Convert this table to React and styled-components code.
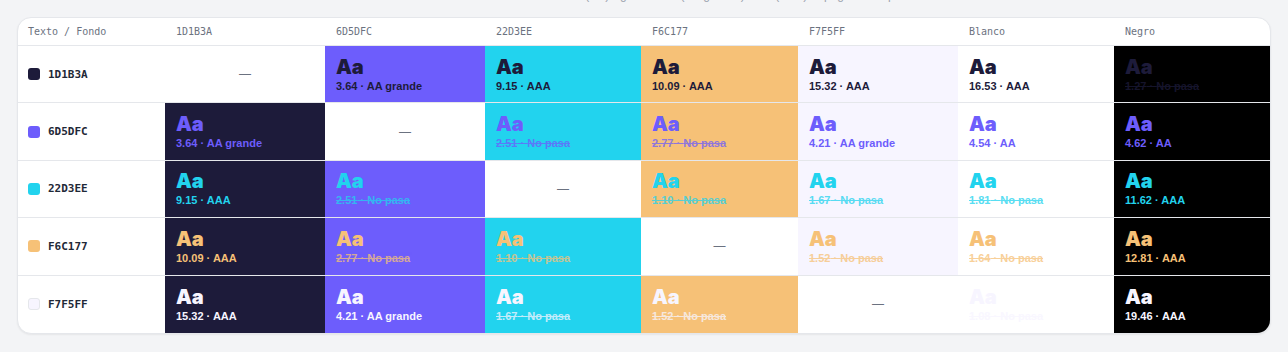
import React from 'react';
import styled, { createGlobalStyle } from 'styled-components';

const GlobalStyle = createGlobalStyle`
  html, body {
    margin: 0;
    padding: 0;
    background: #f3f4f6;
    font-family: 'Liberation Sans', Arial, sans-serif;
  }

  *, *:before, *:after {
    box-sizing: border-box;
  }
`;

const Page = styled.div`
  padding: 0 17px 17px;
  overflow: hidden;
`;

const Caption = styled.p`
  margin: -13px 0 14px;
  height: 16px;
  line-height: 16px;
  text-align: center;
  font-size: 12px;
  color: #9ca3af;
`;

const Card = styled.div`
  background: #ffffff;
  border: 1px solid #e5e7eb;
  border-radius: 14px;
  overflow: hidden;
  box-shadow: 0 1px 2px rgba(0, 0, 0, 0.06);
`;

const Grid = styled.div`
  display: grid;
  grid-template-columns: 147px 160px 160px 156px 157px 160px 156px 1fr;
`;

const HeadCell = styled.div`
  height: 28px;
  display: flex;
  align-items: center;
  font-family: 'DejaVu Sans Mono', 'Liberation Mono', monospace;
  font-size: 10px;
  color: #6b7280;
  border-bottom: 1px solid #e5e7eb;
  padding: 0 10px 0 ${p => (p.$first ? '10px' : '11px')};
`;

const RowLabel = styled.div`
  height: 57.4px;
  padding: 0 10px;
  display: flex;
  align-items: center;
  gap: 8px;
  font-family: 'DejaVu Sans Mono', 'Liberation Mono', monospace;
  font-size: 11px;
  font-weight: 600;
  color: #1f2937;
  border-bottom: ${p => (p.$last ? 'none' : '1px solid #e5e7eb')};
`;

const Swatch = styled.span`
  width: 12px;
  height: 12px;
  border-radius: 3px;
  flex-shrink: 0;
  background: ${p => p.$color};
  border: ${p => (p.$light ? '1px solid #e5e7eb' : 'none')};
`;

const Cell = styled.div`
  height: 57.4px;
  padding: 0 11px;
  display: flex;
  flex-direction: column;
  justify-content: center;
  background: ${p => p.$bg};
  color: ${p => p.$fg};
  border-bottom: ${p => (p.$last ? 'none' : '1px solid #e5e7eb')};
`;

const EmptyCell = styled(Cell)`
  align-items: center;
  font-size: 12px;
  color: #6b7280;
`;

const Sample = styled.span`
  font-family: Inter, 'Liberation Sans', sans-serif;
  font-size: 20px;
  font-weight: 900;
  line-height: 22px;
  letter-spacing: -0.2px;
`;

const Ratio = styled.span`
  margin-top: 1px;
  font-size: 11px;
  font-weight: 700;
  line-height: 14px;
  white-space: nowrap;
  text-decoration: ${p => (p.$fail ? 'line-through' : 'none')};
  opacity: ${p => (p.$fail ? 0.75 : 1)};
`;

const textColors = ['1D1B3A', '6D5DFC', '22D3EE', 'F6C177', 'F7F5FF'];

const backgrounds = [
  { name: '1D1B3A', hex: '#1D1B3A' },
  { name: '6D5DFC', hex: '#6D5DFC' },
  { name: '22D3EE', hex: '#22D3EE' },
  { name: 'F6C177', hex: '#F6C177' },
  { name: 'F7F5FF', hex: '#F7F5FF' },
  { name: 'Blanco', hex: '#FFFFFF' },
  { name: 'Negro', hex: '#000000' },
];

const luminance = (hex) => {
  const h = hex.replace('#', '');
  const [r, g, b] = [0, 2, 4].map(i => {
    const c = parseInt(h.slice(i, i + 2), 16) / 255;
    return c <= 0.03928 ? c / 12.92 : Math.pow((c + 0.055) / 1.055, 2.4);
  });
  return 0.2126 * r + 0.7152 * g + 0.0722 * b;
};

const contrast = (a, b) => {
  const l1 = luminance(a);
  const l2 = luminance(b);
  return (Math.max(l1, l2) + 0.05) / (Math.min(l1, l2) + 0.05);
};

const rating = (ratio) => {
  if (ratio >= 7) return 'AAA';
  if (ratio >= 4.5) return 'AA';
  if (ratio >= 3) return 'AA grande';
  return 'No pasa';
};

const App = () => {
  return (
    <>
      <GlobalStyle />
      <Page>
        <Caption>Contraste WCAG 2.1 · texto normal ≥ 4.5 (AA) · grande ≥ 3 (AA grande) · ≥ 7 (AAA) · tipografía de prueba</Caption>
        <Card>
          <Grid>
            <HeadCell $first>Texto / Fondo</HeadCell>
            {backgrounds.map(bg => (
              <HeadCell key={bg.name}>{bg.name}</HeadCell>
            ))}

            {textColors.map((text, rowIndex) => {
              const fg = `#${text}`;
              const last = rowIndex === textColors.length - 1;
              return (
                <React.Fragment key={text}>
                  <RowLabel $last={last}>
                    <Swatch $color={fg} $light={text === 'F7F5FF'} />
                    {text}
                  </RowLabel>
                  {backgrounds.map(bg => {
                    if (bg.name === text) {
                      return (
                        <EmptyCell key={bg.name} $bg="#ffffff" $last={last}>—</EmptyCell>
                      );
                    }
                    const ratio = contrast(fg, bg.hex);
                    const label = rating(ratio);
                    return (
                      <Cell key={bg.name} $bg={bg.hex} $fg={fg} $last={last}>
                        <Sample>Aa</Sample>
                        <Ratio $fail={label === 'No pasa'}>
                          {ratio.toFixed(2)} · {label}
                        </Ratio>
                      </Cell>
                    );
                  })}
                </React.Fragment>
              );
            })}
          </Grid>
        </Card>
      </Page>
    </>
  );
};

export default App;
